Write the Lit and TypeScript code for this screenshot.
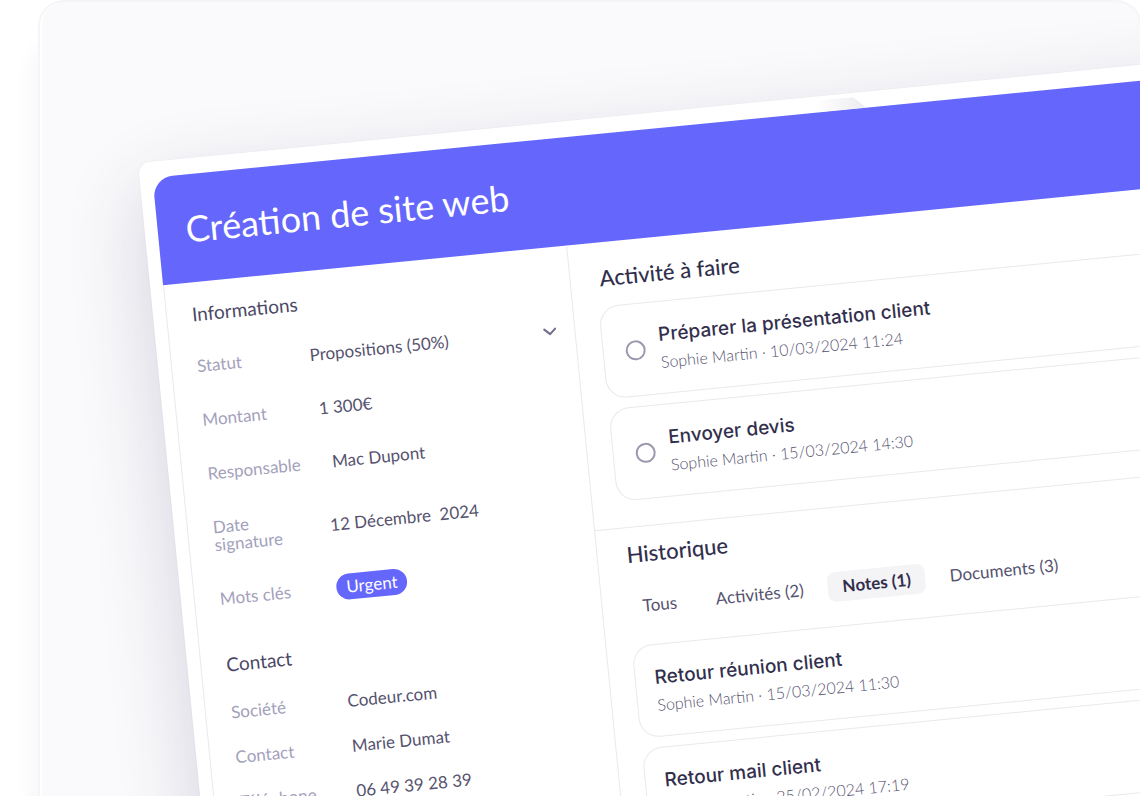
import { LitElement, html, css } from "lit";
import { customElement, property, state } from "lit/decorators.js";

@customElement("entry-card")
class EntryCard extends LitElement {
  @property() heading = "";
  @property() meta = "";
  @property({ type: Boolean }) task = false;

  static styles = css`
    :host { display: block; }
    .card {
      display: flex;
      align-items: center;
      gap: 14px;
      padding: 19px 19px 18px;
      border: 1px solid #e9e9ee;
      border-radius: 20px;
      background: #fff;
    }
    .card.task { padding-left: 22px; }
    .check {
      appearance: none;
      flex: none;
      box-sizing: border-box;
      width: 20px;
      height: 20px;
      margin: 0;
      border: 2px solid #9b99b0;
      border-radius: 50%;
      background: #fff;
    }
    .check:checked { background: #6466fc; }
    .texts { display: block; white-space: nowrap; }
    .heading {
      display: block;
      font: 500 19px/28px Inter, sans-serif;
      color: #322f4d;
    }
    .meta {
      display: block;
      font: 300 16px/26px Lato, sans-serif;
      color: #55526f;
    }
  `;

  render() {
    const texts = html`<span class="heading">${this.heading}</span><span class="meta">${this.meta}</span>`;
    return this.task
      ? html`<div class="card task">
          <input class="check" type="checkbox" id="done" />
          <label class="texts" for="done">${texts}</label>
        </div>`
      : html`<article class="card"><div class="texts">${texts}</div></article>`;
  }
}

@customElement("app-root")
class AppRoot extends LitElement {
  @state() private tab = "Notes (1)";

  private tabs = ["Tous", "Activités (2)", "Notes (1)", "Documents (3)"];
  private tasks = [
    ["Préparer la présentation client", "Sophie Martin · 10/03/2024 11:24"],
    ["Envoyer devis", "Sophie Martin · 15/03/2024 14:30"],
  ];
  private notes = [
    ["Retour réunion client", "Sophie Martin · 15/03/2024 11:30"],
    ["Retour mail client", "Sophie Martin · 25/02/2024 17:19"],
  ];
  private contact = [
    ["Société", "Codeur.com"],
    ["Contact", "Marie Dumat"],
    ["Téléphone", "06 49 39 28 39"],
  ];

  static styles = css`
    :host {
      display: block;
      box-sizing: border-box;
      height: 100vh;
      padding: 2px 0 0 40px;
      overflow: hidden;
      background: #fff;
      font-family: Lato, sans-serif;
    }
    .stage {
      box-sizing: border-box;
      height: 110vh;
      padding: 161px 0 0 96px;
      overflow: hidden;
      border-left: 2px solid #fff;
      border-radius: 24px;
      background: #fafafc;
      box-shadow: 0 0 0 2px #f5f5f7, -4px 40px 24px rgba(40, 40, 60, 0.05);
    }
    .panel {
      position: relative;
      box-sizing: border-box;
      width: 110%;
      min-height: 110vh;
      padding: 16px 13px;
      border-radius: 12px;
      background: #fff;
      box-shadow: 0 0 2px rgba(50, 47, 90, 0.06), 0 30px 80px rgba(50, 47, 90, 0.2);
      transform: rotate(-5.6deg);
      transform-origin: 0 0;
    }
    .sheen {
      position: absolute;
      top: 4px;
      left: 680px;
      width: 50px;
      height: 12px;
      background: linear-gradient(90deg, #fff, #ececf0);
      clip-path: polygon(0 0, 76% 0, 100% 100%, 0 100%);
    }
    .banner {
      padding: 30px 28px;
      border-radius: 20px 20px 0 0;
      background: #6466fc;
    }
    .title {
      margin: 0;
      font-size: 36px;
      line-height: 48px;
      font-weight: 400;
      color: #fff;
    }
    .body {
      display: grid;
      grid-template-columns: 404px 1fr;
      border-left: 1px solid #e9e9ee;
      min-height: 100vh;
    }
    .details { padding: 20px 18px 0 25px; }
    .subtitle {
      margin: 0;
      font-size: 19px;
      line-height: 24px;
      font-weight: 400;
      color: #4b4866;
    }
    .fields {
      display: grid;
      gap: 36px;
      margin: 31px 0 45px;
      font-size: 17px;
      line-height: 18px;
    }
    .fields.compact { gap: 27px; margin-top: 27px; }
    .field {
      display: grid;
      grid-template-columns: 113px 1fr;
      align-items: center;
    }
    .name { color: #a3a1bb; max-width: 94px; }
    .value { margin: 0; padding-left: 4px; color: #56536f; white-space: pre; }
    .value.person { padding-left: 12px; }
    .picker { display: flex; align-items: center; height: 18px; }
    .select {
      appearance: none;
      flex: 1;
      margin: 0;
      padding: 0;
      border: 0;
      background: none;
      font: inherit;
      color: #56536f;
    }
    .chevron { flex: none; width: 14px; height: 14px; }
    .tag {
      display: inline-block;
      margin: -4px 0;
      padding: 0 10px;
      border-radius: 13px;
      background: #6466fc;
      line-height: 26px;
      color: #fff;
    }
    .feed { border-left: 1px solid #e9e9ee; }
    .section { padding: 23px 25px 26px; }
    .section.history { padding-top: 14px; border-top: 1px solid #e9e9ee; }
    .section-title {
      margin: 0 0 15px;
      padding-left: 4px;
      font-size: 22px;
      line-height: 26px;
      font-weight: 500;
      color: #322f4d;
    }
    .list { display: grid; gap: 10px; }
    .tabs { display: flex; gap: 9px; margin: 24px 0; }
    .tab {
      padding: 0 15px;
      border: 0;
      border-radius: 8px;
      background: none;
      font: 400 17px/30px Lato, sans-serif;
      color: #56536f;
    }
    .tab.active { background: #f4f4f6; font-weight: 700; color: #322f4d; }
  `;

  render() {
    return html`<main class="stage">
      <section class="panel">
        <span class="sheen"></span>
        <header class="banner"><h1 class="title">Création de site web</h1></header>
        <div class="body">
          <aside class="details">
            <h2 class="subtitle">Informations</h2>
            <div class="fields">
              <div class="field">
                <label class="name" for="status">Statut</label>
                <div class="picker">
                  <select class="select" id="status"><option>Propositions (50%)</option></select>
                  <svg class="chevron" viewBox="0 0 14 14" fill="none" stroke="#6f6d8c" stroke-width="2" stroke-linecap="round" stroke-linejoin="round"><path d="M2 4.5 L7.5 9.5 L13 4.5" /></svg>
                </div>
              </div>
              <div class="field"><span class="name">Montant</span><span class="value">1 300€</span></div>
              <div class="field"><span class="name">Responsable</span><span class="value person">Mac Dupont</span></div>
              <div class="field"><span class="name">Date signature</span><span class="value">12 Décembre  2024</span></div>
              <div class="field"><span class="name">Mots clés</span><span class="value"><span class="tag">Urgent</span></span></div>
            </div>
            <h2 class="subtitle">Contact</h2>
            <div class="fields compact">
              ${this.contact.map(([name, value]) => html`<div class="field"><span class="name">${name}</span><span class="value">${value}</span></div>`)}
            </div>
          </aside>
          <div class="feed">
            <section class="section">
              <h2 class="section-title">Activité à faire</h2>
              <div class="list">
                ${this.tasks.map(([h, m]) => html`<entry-card task .heading=${h} .meta=${m}></entry-card>`)}
              </div>
            </section>
            <section class="section history">
              <h2 class="section-title">Historique</h2>
              <nav class="tabs">
                ${this.tabs.map((t) => html`<button class="tab ${t === this.tab ? "active" : ""}" aria-pressed=${t === this.tab} @click=${() => (this.tab = t)}>${t}</button>`)}
              </nav>
              <div class="list">
                ${this.notes.map(([h, m]) => html`<entry-card .heading=${h} .meta=${m}></entry-card>`)}
              </div>
            </section>
          </div>
        </div>
      </section>
    </main>`;
  }
}
